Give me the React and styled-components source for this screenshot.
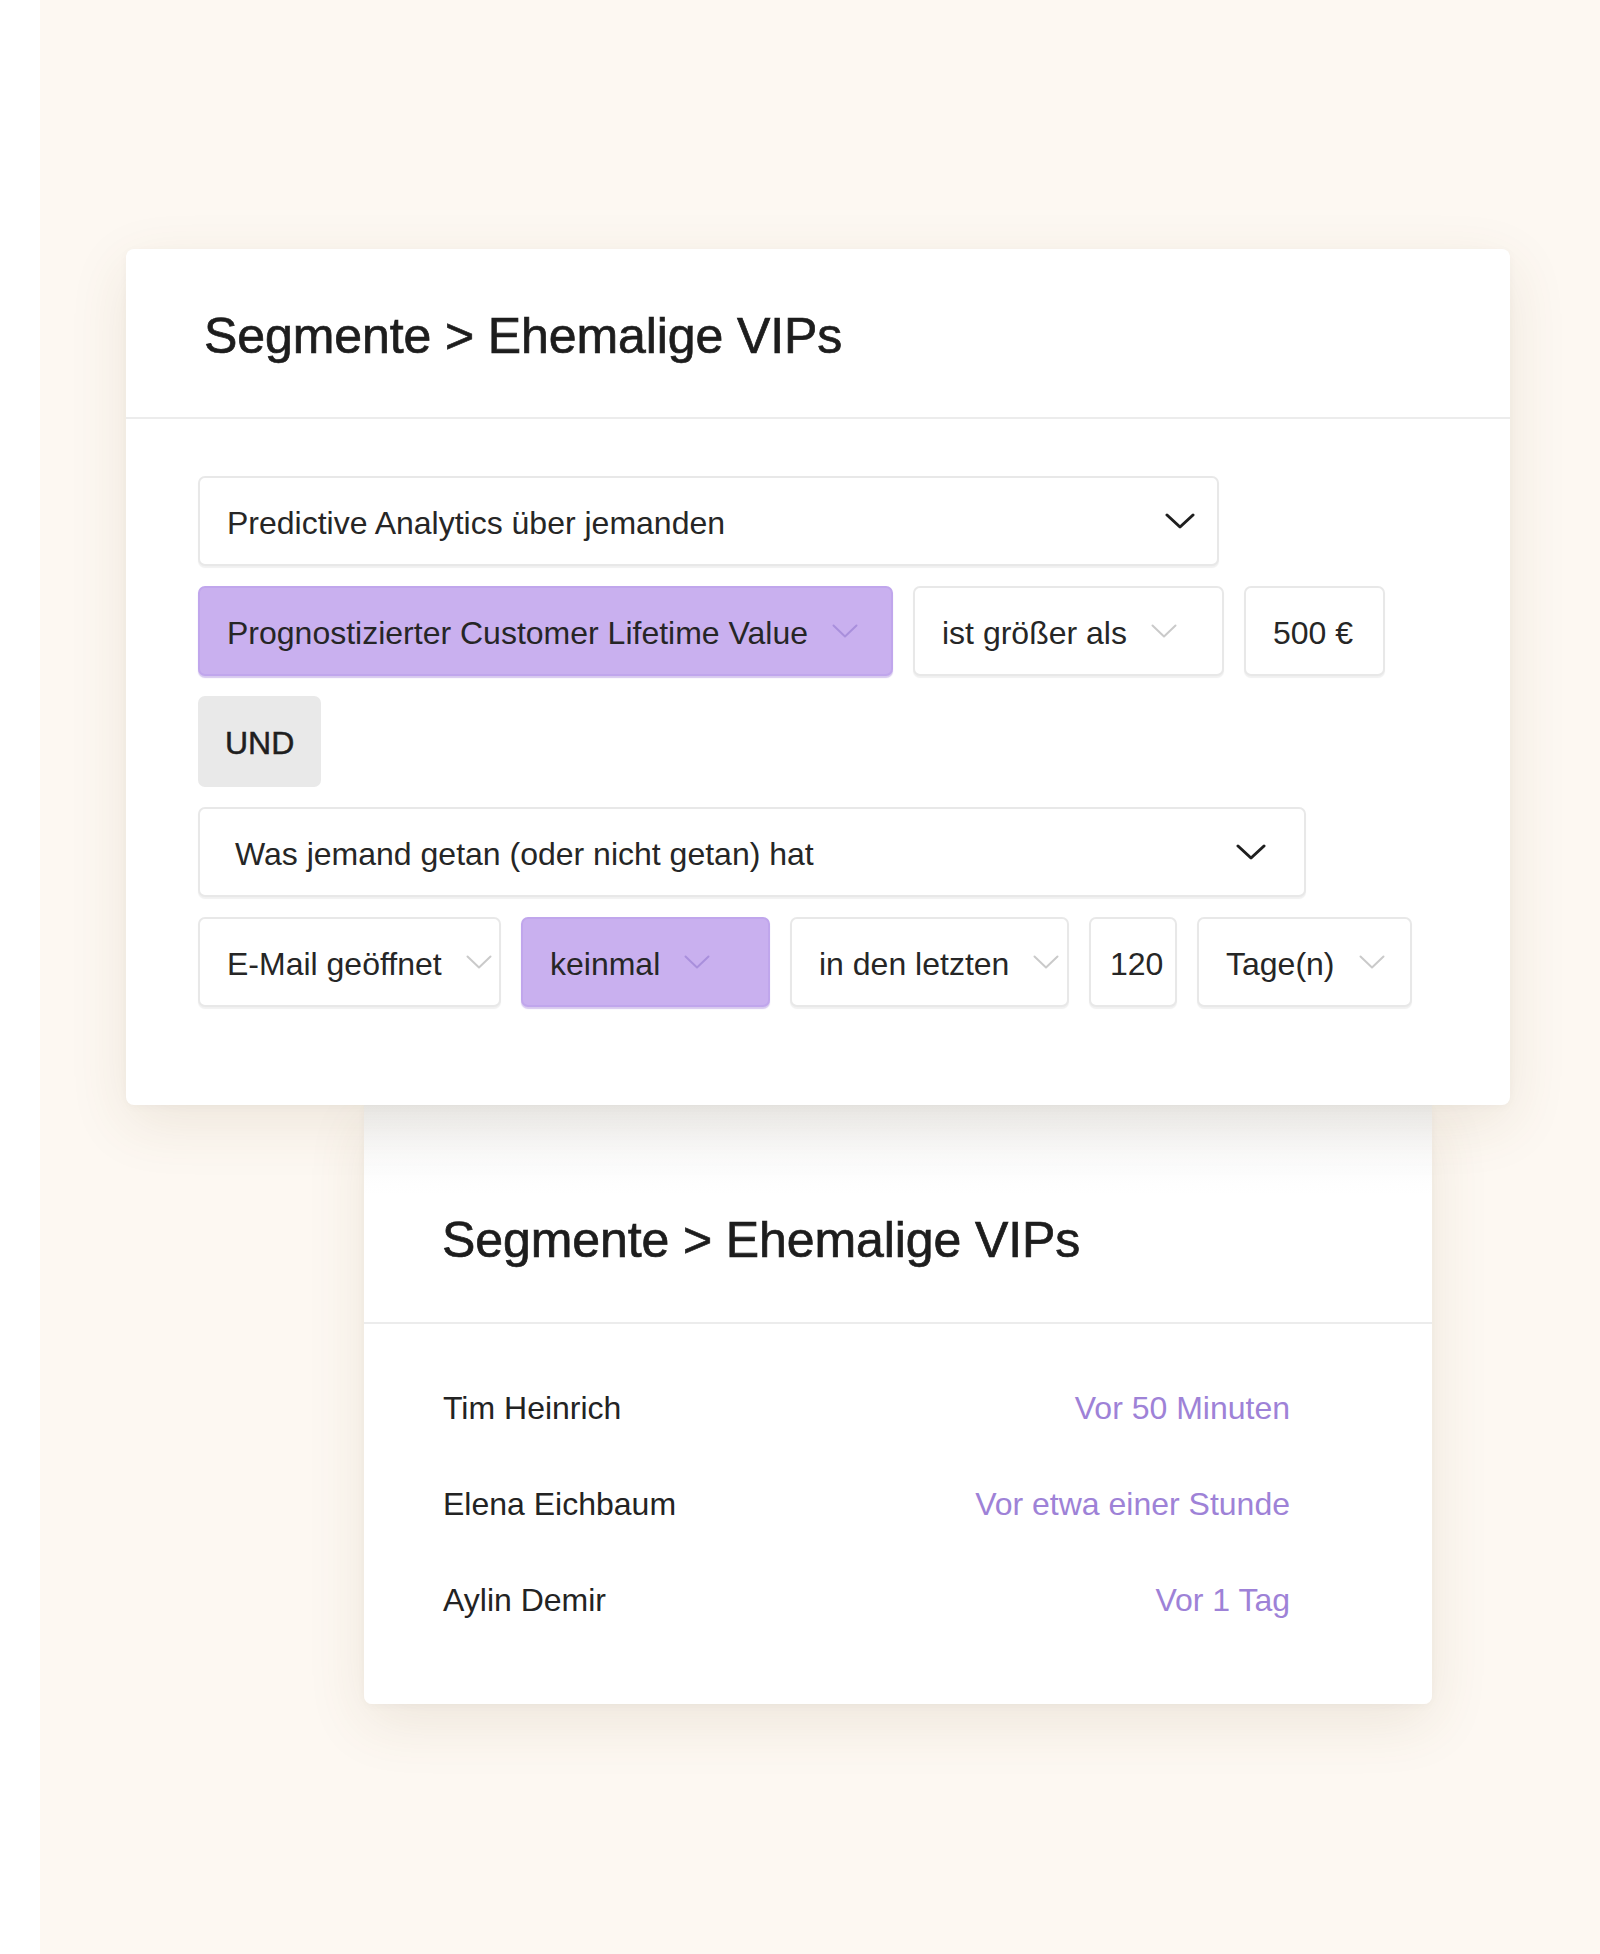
import React from "react";
import styled, { createGlobalStyle } from "styled-components";

const Global = createGlobalStyle`
  html, body { margin: 0; padding: 0; background: #ffffff; }
  body { font-family: "Liberation Sans", Arial, sans-serif; color: #232323; }
  * { box-sizing: border-box; }
`;

const Page = styled.div`
  width: 1600px;
  min-height: 1954px;
  padding-left: 40px;
  background: #ffffff;
`;

const Canvas = styled.div`
  min-height: 1954px;
  background: #fdf8f2;
  padding-top: 249px;
  display: flex;
  flex-direction: column;
`;

const Card = styled.section`
  position: relative;
  z-index: ${(p) => p.$z || 1};
  margin-left: ${(p) => p.$left}px;
  width: ${(p) => p.$width}px;
  background: ${(p) => (p.$shaded ? "linear-gradient(#f3f3f3 0px, #fbfbfb 50px, #ffffff 90px)" : "#ffffff")};
  border-radius: ${(p) => (p.$shaded ? "0 0 8px 8px" : "8px")};
  box-shadow: 0 18px 60px rgba(110, 80, 40, 0.11), 0 2px 10px rgba(0, 0, 0, 0.03);
`;

const Header = styled.header`
  padding: ${(p) => p.$pt}px 78px ${(p) => p.$pb}px;
  border-bottom: 2px solid #ececec;
`;

const Title = styled.h1`
  margin: 0;
  font-family: "Liberation Sans", Arial, sans-serif;
  font-weight: 400;
  font-size: 50px;
  line-height: 60px;
  color: #1d1d1d;
  -webkit-text-stroke: 0.7px #1d1d1d;
  letter-spacing: -0.1px;
`;

const Body = styled.div`
  padding: 57px 72px 98px;
  display: flex;
  flex-direction: column;
  gap: 20px;
`;

const Row = styled.div`
  display: flex;
  gap: 20px;
`;

const Box = styled.div`
  height: 90px;
  width: ${(p) => p.$w}px;
  display: flex;
  align-items: center;
  justify-content: ${(p) => (p.$spread ? "space-between" : "flex-start")};
  gap: 24px;
  padding-top: 4px;
  padding-left: ${(p) => p.$pl || 27}px;
  padding-right: ${(p) => p.$pr || 0}px;
  border-radius: 7px;
  background: ${(p) => (p.$purple ? "#c9b0ef" : "#ffffff")};
  border: 2px solid ${(p) => (p.$purple ? "#c0a6ec" : "#e8e8e8")};
  box-shadow: 0 2px 1px ${(p) => (p.$purple ? "rgba(140,100,210,0.35)" : "rgba(0,0,0,0.06)")};
  font-size: 32px;
  color: #262626;
  white-space: nowrap;
  flex-shrink: 0;
`;

const AndChip = styled.div`
  width: 123px;
  height: 91px;
  display: flex;
  align-items: center;
  padding-top: 4px;
  padding-left: 27px;
  border-radius: 7px;
  background: #e9e9e9;
  font-size: 32px;
  color: #1f1f1f;
  -webkit-text-stroke: 0.5px #1f1f1f;
`;

const Chevron = ({ dark, color }) => (
  <svg width={dark ? 30 : 26} height={dark ? 16 : 14} viewBox={dark ? "0 0 30 16" : "0 0 26 14"} style={{ flexShrink: 0, marginTop: -4 }}>
    {dark ? (
      <polyline points="2,2 15,14 28,2" fill="none" stroke="#1f1f1f" strokeWidth="3" strokeLinecap="round" strokeLinejoin="round" />
    ) : (
      <polyline points="1.5,1.5 13,12.5 24.5,1.5" fill="none" stroke={color || "#cacaca"} strokeWidth="2" strokeLinecap="round" strokeLinejoin="round" />
    )}
  </svg>
);

const List = styled.div`
  padding: 36px 142px 56px 79px;
  display: flex;
  flex-direction: column;
`;

const Person = styled.div`
  height: 96px;
  display: flex;
  align-items: center;
  justify-content: space-between;
  font-size: 32px;
`;

const Name = styled.span`
  color: #232323;
`;

const When = styled.span`
  color: #9e82d7;
`;

const people = [
  ["Tim Heinrich", "Vor 50 Minuten"],
  ["Elena Eichbaum", "Vor etwa einer Stunde"],
  ["Aylin Demir", "Vor 1 Tag"],
];

export default function App() {
  return (
    <Page>
      <Global />
      <Canvas>
        <Card $left={86} $width={1384} $z={2}>
          <Header $pt={57} $pb={51}>
            <Title>Segmente &gt; Ehemalige VIPs</Title>
          </Header>
          <Body>
            <Box $w={1021} $spread $pr={22}>
              <span>Predictive Analytics über jemanden</span>
              <Chevron dark />
            </Box>
            <Row>
              <Box $w={695} $purple>
                <span>Prognostizierter Customer Lifetime Value</span>
                <Chevron color="#a98fdc" />
              </Box>
              <Box $w={311}>
                <span>ist größer als</span>
                <Chevron />
              </Box>
              <Box $w={141}>
                <span>500 €</span>
              </Box>
            </Row>
            <AndChip>UND</AndChip>
            <Box $w={1108} $spread $pl={35} $pr={38}>
              <span>Was jemand getan (oder nicht getan) hat</span>
              <Chevron dark />
            </Box>
            <Row>
              <Box $w={303}>
                <span>E-Mail geöffnet</span>
                <Chevron />
              </Box>
              <Box $w={249} $purple>
                <span>keinmal</span>
                <Chevron color="#a98fdc" />
              </Box>
              <Box $w={279}>
                <span>in den letzten</span>
                <Chevron />
              </Box>
              <Box $w={88} $pl={19}>
                <span>120</span>
              </Box>
              <Box $w={215}>
                <span>Tage(n)</span>
                <Chevron />
              </Box>
            </Row>
          </Body>
        </Card>
        <Card $left={324} $width={1068} $z={1} $shaded>
          <Header $pt={105} $pb={52}>
            <Title>Segmente &gt; Ehemalige VIPs</Title>
          </Header>
          <List>
            {people.map(([n, w]) => (
              <Person key={n}>
                <Name>{n}</Name>
                <When>{w}</When>
              </Person>
            ))}
          </List>
        </Card>
      </Canvas>
    </Page>
  );
}
